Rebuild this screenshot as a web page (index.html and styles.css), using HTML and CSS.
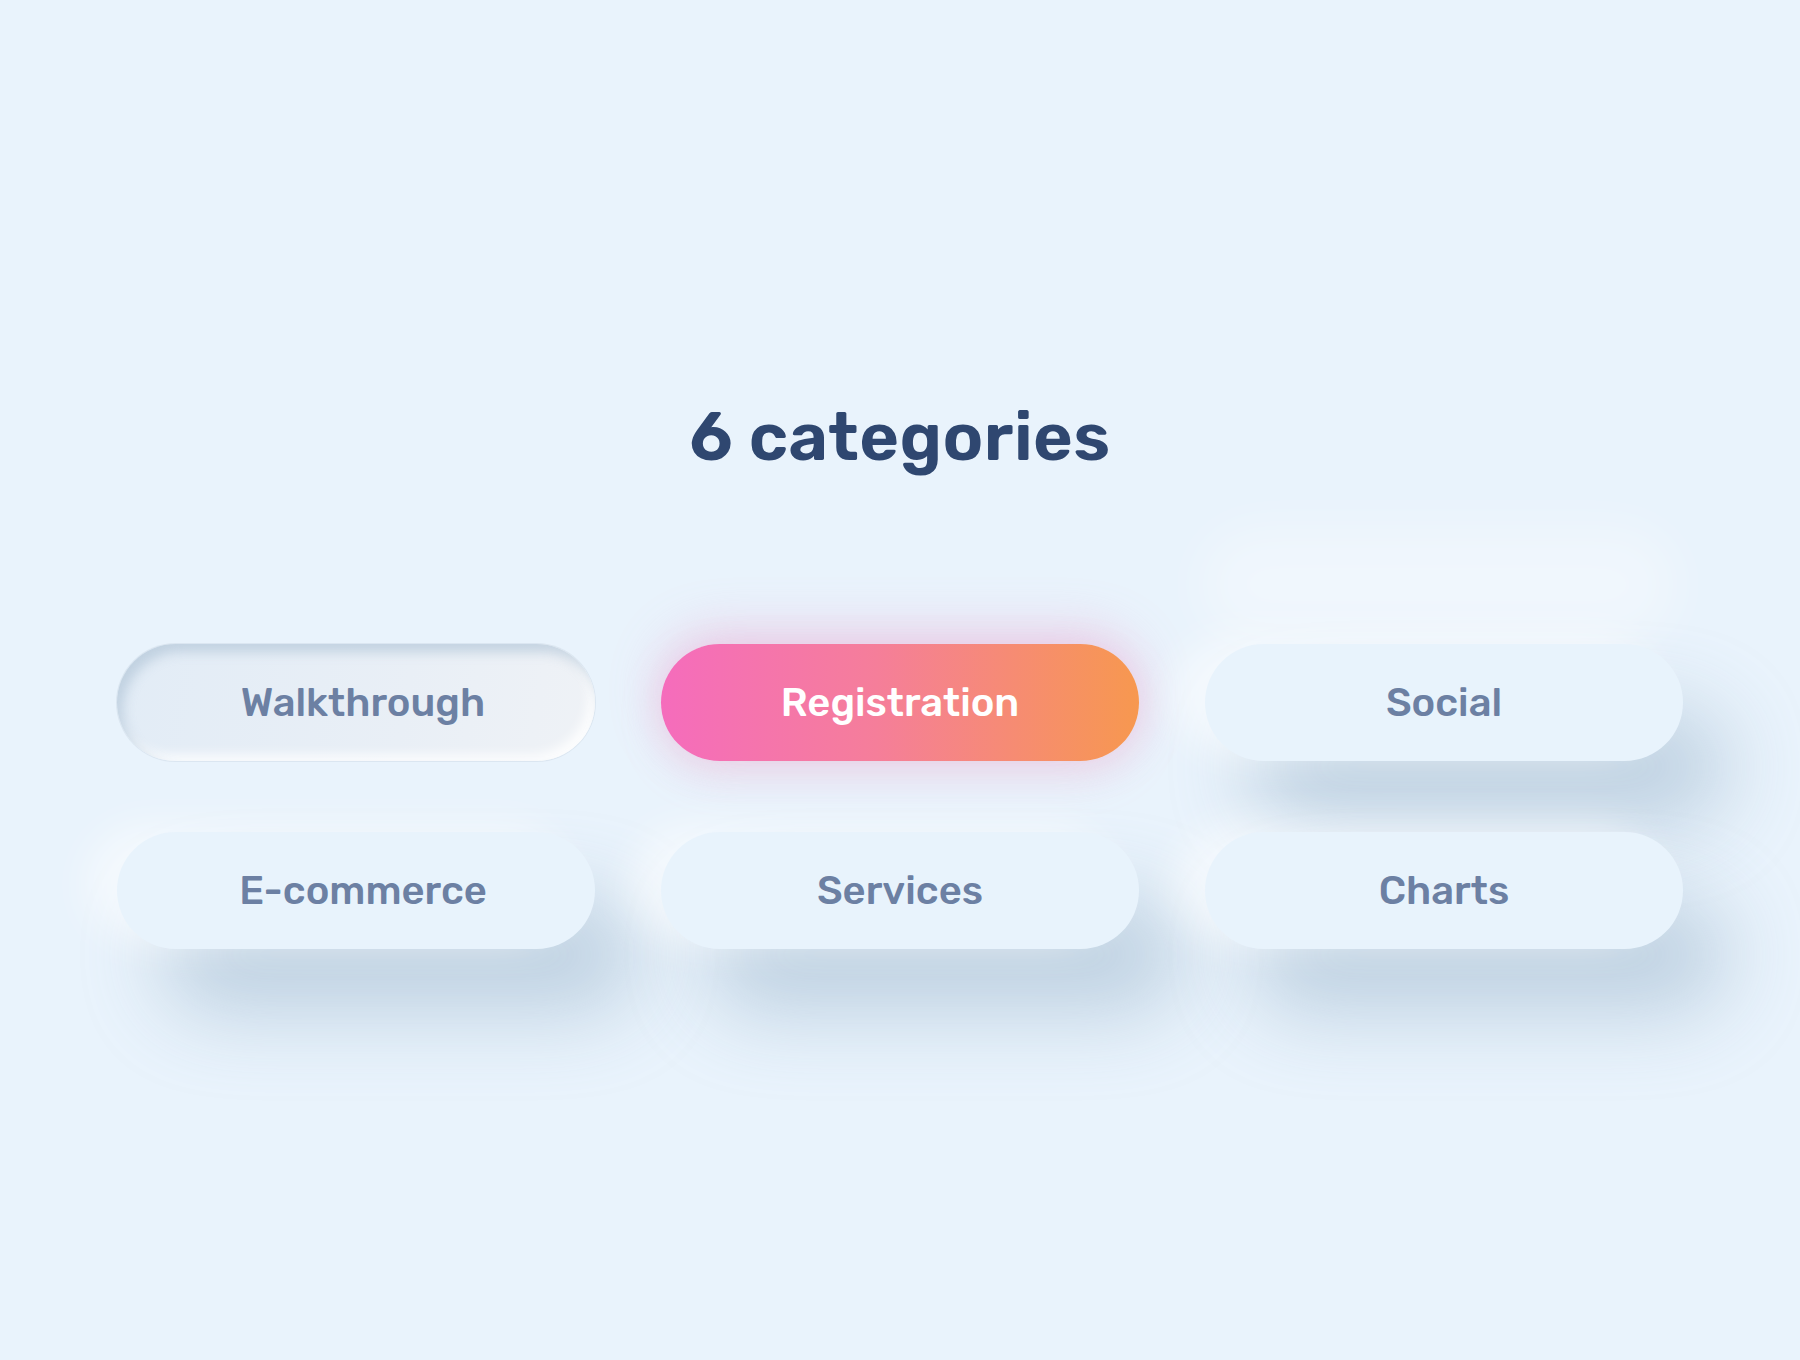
FILE: index.html
```html
<!DOCTYPE html>
<html lang="en">
<head>
<meta charset="utf-8">
<title>6 categories</title>
<link rel="stylesheet" href="styles.css">
</head>
<body>
<main class="page">
  <h1 class="title">6 categories</h1>
  <div class="grid">
    <button class="chip chip--pressed">Walkthrough</button>
    <button class="chip chip--active">Registration</button>
    <button class="chip chip--raised chip--ghost">Social</button>
    <button class="chip chip--raised">E-commerce</button>
    <button class="chip chip--raised">Services</button>
    <button class="chip chip--raised">Charts</button>
  </div>
</main>
</body>
</html>
```

FILE: styles.css
```css
html, body {
  margin: 0;
  padding: 0;
}

body {
  background: #e9f3fc;
  font-family: "Rubik", "Roboto", "Inter", "Liberation Sans", sans-serif;
  width: 1800px;
  height: 1360px;
  overflow: hidden;
}

.page {
  display: flex;
  flex-direction: column;
  align-items: center;
  padding-top: 392px;
}

.title {
  margin: 0;
  font-size: 68px;
  line-height: 90px;
  font-weight: 600;
  color: #2f4770;
  letter-spacing: 0.5px;
}

.grid {
  margin-top: 162px;
  display: grid;
  grid-template-columns: repeat(3, 478px);
  grid-auto-rows: 117px;
  column-gap: 66px;
  row-gap: 71px;
}

.chip {
  border: 0;
  border-radius: 60px;
  font-family: inherit;
  font-size: 40px;
  font-weight: 500;
  color: #6c80a3;
  background: #e8f3fc;
  padding: 0;
  cursor: pointer;
}

/* first column labels sit slightly right of centre */
.chip:nth-child(3n+1) {
  padding-left: 14px;
}

/* soft raised tile: light from top-left, shadow falling bottom-right */
.chip--raised {
  box-shadow:
    -30px -6px 40px rgba(255, 255, 255, 0.55),
    44px 64px 80px rgba(176, 198, 216, 0.75);
}

.chip--ghost {
  box-shadow:
    -6px -118px 50px rgba(255, 255, 255, 0.32),
    -30px -6px 40px rgba(255, 255, 255, 0.55),
    44px 64px 80px rgba(176, 198, 216, 0.75);
}

/* pushed-in tile */
.chip--pressed {
  background: linear-gradient(100deg, #e2ecf6 0%, #e9eff6 60%, #eff2f6 100%);
  box-shadow:
    inset 6px 8px 12px rgba(182, 200, 218, 0.75),
    inset -6px -6px 12px rgba(255, 255, 255, 0.9),
    0 0 0 1px rgba(210, 222, 234, 0.6);
}

/* selected tile */
.chip--active {
  color: #ffffff;
  background: linear-gradient(90deg, #f56cbc 0%, #f57e9a 45%, #f7984f 100%);
  box-shadow:
    0 -12px 50px rgba(236, 150, 200, 0.42),
    0 14px 40px rgba(236, 170, 200, 0.28);
}
```
